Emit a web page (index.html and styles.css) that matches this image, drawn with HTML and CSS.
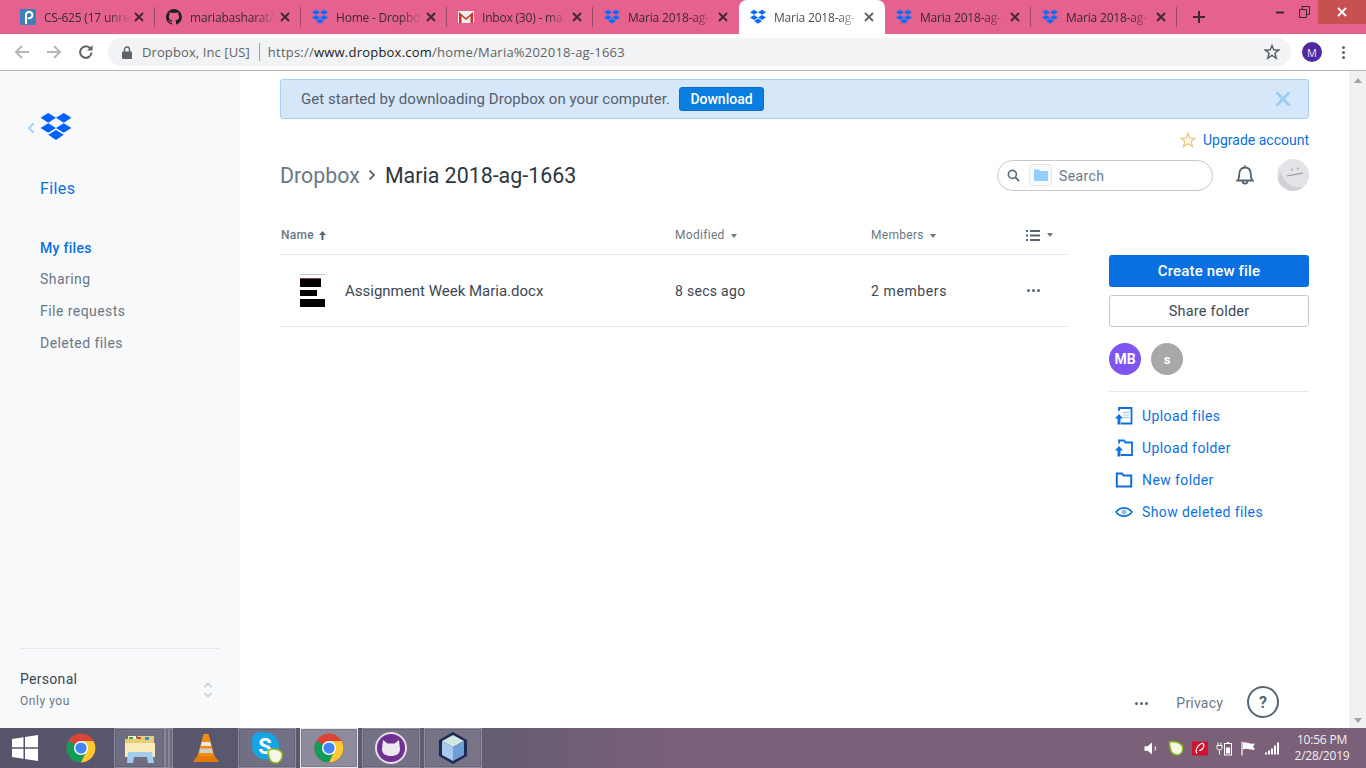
FILE: index.html
```html
<!DOCTYPE html>
<html lang="en">
<head>
  <meta charset="UTF-8" />
  <title>Dropbox - Maria 2018-ag-1663</title>
  <link rel="stylesheet" href="styles.css">
</head>
<body>
  <svg class="defs" width="0" height="0">
    <symbol id="db" viewBox="0 0 32 29">
      <path d="M8 0L16 5L8 10L0 5ZM24 0L32 5L24 10L16 5ZM8 10.5L16 15.5L8 20.5L0 15.5ZM24 10.5L32 15.5L24 20.5L16 15.5ZM16 17.5L24 22.5L16 28L8 22.5Z"/>
    </symbol>
    <symbol id="chrome" viewBox="0 0 32 32">
      <circle cx="16" cy="16" r="15.5" fill="#db4437"/>
      <path d="M16 16L2.6 8.2A15.5 15.5 0 0 0 16 31.5L23.8 18Z" fill="#0f9d58"/>
      <path d="M16 8.5H29.4A15.5 15.5 0 0 1 16 31.5L23 17Z" fill="#fcc934"/>
      <circle cx="16" cy="16" r="7.5" fill="#fff"/>
      <circle cx="16" cy="16" r="6" fill="#4285f4"/>
    </symbol>
    <symbol id="close" viewBox="0 0 10 10">
      <path d="M1 1L9 9M9 1L1 9" fill="none" stroke="currentColor" stroke-width="1.8"/>
    </symbol>
  </svg>

  <header class="tabstrip">
    <div class="tab">
      <svg class="favicon" viewBox="0 0 16 16"><rect width="16" height="16" fill="#3d80b5"/><path d="M6 15V5.5A3.2 3.2 0 1 1 8 9" fill="none" stroke="#fff" stroke-width="2"/></svg>
      <span class="tab-title">CS-625 (17 unre</span>
      <svg class="tab-x"><use href="#close"/></svg>
    </div>
    <div class="tab">
      <svg class="favicon" viewBox="0 0 16 16"><path fill="#1b1f23" d="M8 0a8 8 0 0 0-2.5 15.6c.4.1.5-.2.5-.4v-1.4c-2.2.5-2.7-1-2.7-1-.4-.9-.9-1.200-.9-1.200-.7-.5.1-.5.1-.5.8.1 1.200.8 1.200.8.7 1.200 1.900.9 2.300.7.100-.5.300-.9.500-1.100-1.800-.2-3.600-.9-3.600-4 0-.9.300-1.600.800-2.100-.100-.2-.400-1 .100-2.100 0 0 .700-.2 2.200.800a7.600 7.600 0 0 1 4 0c1.500-1 2.200-.8 2.200-.8.400 1.100.200 1.900.100 2.100.500.600.800 1.300.800 2.100 0 3.100-1.900 3.700-3.700 3.900.300.300.600.800.600 1.500v2.200c0 .2.100.5.600.4A8 8 0 0 0 8 0z"/></svg>
      <span class="tab-title">mariabasharat/</span>
      <svg class="tab-x"><use href="#close"/></svg>
    </div>
    <div class="tab">
      <svg class="favicon db-blue"><use href="#db"/></svg>
      <span class="tab-title">Home - Dropbo</span>
      <svg class="tab-x"><use href="#close"/></svg>
    </div>
    <div class="tab">
      <svg class="favicon" viewBox="0 0 16 16"><rect y="2" width="16" height="12" fill="#eee"/><path d="M1 14V3l7 6 7-6v11h-2.500V7L8 11 3.500 7v7z" fill="#c5392b"/></svg>
      <span class="tab-title">Inbox (30) - ma</span>
      <svg class="tab-x"><use href="#close"/></svg>
    </div>
    <div class="tab">
      <svg class="favicon db-blue"><use href="#db"/></svg>
      <span class="tab-title">Maria 2018-ag-</span>
      <svg class="tab-x"><use href="#close"/></svg>
    </div>
    <div class="tab tab-active">
      <svg class="favicon db-blue"><use href="#db"/></svg>
      <span class="tab-title">Maria 2018-ag-</span>
      <svg class="tab-x"><use href="#close"/></svg>
    </div>
    <div class="tab">
      <svg class="favicon db-blue"><use href="#db"/></svg>
      <span class="tab-title">Maria 2018-ag-</span>
      <svg class="tab-x"><use href="#close"/></svg>
    </div>
    <div class="tab">
      <svg class="favicon db-blue"><use href="#db"/></svg>
      <span class="tab-title">Maria 2018-ag-</span>
      <svg class="tab-x"><use href="#close"/></svg>
    </div>
    <svg class="new-tab" viewBox="0 0 14 14"><path d="M7 1V13M1 7H13" fill="none" stroke="#3a2a30" stroke-width="2"/></svg>
    <div class="win-controls">
      <span class="win-btn"><svg width="10" height="10" viewBox="0 0 10 10"><path d="M1 5.500H9" stroke="#2b2b2b" stroke-width="2"/></svg></span>
      <span class="win-btn"><svg width="11" height="12" viewBox="0 0 11 12"><path d="M.5 3.500H7.500V11.500H.5ZM3 3.500V.5H10.500V8.500H7.500" fill="none" stroke="#2b2b2b"/></svg></span>
      <span class="win-close"><svg width="10" height="10"><use href="#close"/></svg></span>
    </div>
  </header>

  <div class="toolbar">
    <svg class="nav-icon" viewBox="0 0 16 16"><path d="M15 8H2M8 2L2 8L8 14" fill="none" stroke="#b5b7ba" stroke-width="2"/></svg>
    <svg class="nav-icon" viewBox="0 0 16 16"><path d="M1 8H14M8 2L14 8L8 14" fill="none" stroke="#b5b7ba" stroke-width="2"/></svg>
    <svg class="nav-icon" viewBox="0 0 16 16"><path d="M13.500 8.500A5.700 5.700 0 1 1 11.800 4" fill="none" stroke="#5f6368" stroke-width="2"/><path d="M14.500 1V6.500H9Z" fill="#5f6368"/></svg>
    <div class="omnibox">
      <svg class="lock" viewBox="0 0 10 13"><path d="M2.500 6V3.500a2.500 2.500 0 0 1 5 0V6" fill="none" stroke="#5f6368" stroke-width="1.400"/><rect y="5.500" width="10" height="7.500" rx="1" fill="#5f6368"/></svg>
      <span class="site-name">Dropbox, Inc [US]</span>
      <span class="url">https://<b>www.dropbox.com</b>/home/Maria%202018-ag-1663</span>
      <svg class="star" viewBox="0 0 16 16"><path d="M8 1.500L9.900 6H14.800L10.900 9.200L12.300 14.200L8 11.400L3.700 14.200L5.100 9.200L1.200 6H6.100Z" fill="none" stroke="#5f6368" stroke-width="1.500"/></svg>
    </div>
    <span class="profile">M</span>
    <span class="dots"><i></i><i></i><i></i></span>
  </div>

  <div class="window">
    <aside class="sidebar">
      <div class="side-top">
        <div class="brand">
          <svg class="back" viewBox="0 0 8 12"><path d="M6.500 1.500L2 6L6.500 10.500" fill="none" stroke="#a9d0f5" stroke-width="2"/></svg>
          <svg class="brand-logo"><use href="#db"/></svg>
        </div>
        <div class="side-title">Files</div>
        <nav class="side-nav">
          <a class="side-link current">My files</a>
          <a class="side-link">Sharing</a>
          <a class="side-link">File requests</a>
          <a class="side-link">Deleted files</a>
        </nav>
      </div>
      <div class="account">
        <div>
          <div class="account-name">Personal</div>
          <div class="account-sub">Only you</div>
        </div>
        <svg class="updown" viewBox="0 0 10 18"><path d="M1.500 6L5 2.500L8.500 6M1.500 12L5 15.500L8.500 12" fill="none" stroke="#c4cad0" stroke-width="1.500"/></svg>
      </div>
    </aside>

    <main class="content">
      <div class="banner">
        <span>Get started by downloading Dropbox on your computer.</span>
        <button class="btn-download">Download</button>
        <svg class="banner-x"><use href="#close"/></svg>
      </div>

      <div class="upgrade">
        <svg class="upgrade-star" viewBox="0 0 16 16"><path d="M8 1L10 5.900L15.200 6.200L11.200 9.500L12.500 14.600L8 11.800L3.500 14.600L4.800 9.500L.8 6.200L6 5.900Z" fill="#fbf6e6" stroke="#e8c983" stroke-width="1.200"/></svg>
        <a class="link">Upgrade account</a>
      </div>

      <div class="title-row">
        <h1 class="crumbs"><span class="crumb-root">Dropbox</span>
          <svg class="crumb-sep" viewBox="0 0 8 12"><path d="M1.500 1.500L6 6L1.500 10.500" fill="none" stroke="#3d4752" stroke-width="1.500"/></svg>
          <span>Maria 2018-ag-1663</span></h1>
        <div class="search">
          <svg class="search-icon" viewBox="0 0 14 14"><circle cx="5.800" cy="5.800" r="4.300" fill="none" stroke="#5b6b7a" stroke-width="1.800"/><path d="M9 9L13 13" stroke="#5b6b7a" stroke-width="2"/></svg>
          <span class="search-scope"><svg viewBox="0 0 14 12" width="14" height="12"><path d="M0 1.500A1 1 0 0 1 1 .5H5L6.500 2H13A1 1 0 0 1 14 3V11A1 1 0 0 1 13 12H1A1 1 0 0 1 0 11Z" fill="#92ceff"/></svg></span>
          <span class="search-text">Search</span>
        </div>
        <svg class="bell" viewBox="0 0 18 20"><path d="M1.500 15.500C3.200 14 3.200 12 3.200 9.500C3.200 5.200 5.500 2.500 9 2.500C12.500 2.500 14.800 5.200 14.800 9.500C14.800 12 14.800 14 16.500 15.500ZM6.500 16C6.500 19.500 11.500 19.500 11.500 16M9 .5V2.500" fill="none" stroke="#566573" stroke-width="1.800"/></svg>
        <svg class="avatar" viewBox="0 0 32 32"><circle cx="16" cy="16" r="16" fill="#e3e4e7"/><path d="M1 21A16 16 0 0 0 27 27.500C17 30 7 25 3 12Z" fill="#cfd1d6"/><path d="M10 17L26 14M15 9.500V12M21 8.500V11" fill="none" stroke="#8d9096"/></svg>
      </div>

      <div class="columns">
        <section class="files">
          <div class="row head">
            <span class="col-name"><b>Name</b>
              <svg class="sort" viewBox="0 0 7 9"><path d="M3.500 0L7 4H4.500V9H2.500V4H0Z"/></svg></span>
            <span class="col-mod">Modified<i class="caret"></i></span>
            <span class="col-mem">Members<i class="caret"></i></span>
            <span class="col-act">
              <svg class="list-icon" viewBox="0 0 14 11"><path d="M0 0H2V2H0ZM4 0H14V2H4ZM0 4.500H2V6.500H0ZM4 4.500H14V6.500H4ZM0 9H2V11H0ZM4 9H14V11H4Z"/></svg><i class="caret"></i>
            </span>
          </div>
          <div class="row file">
            <span class="col-name">
              <span class="thumb"><i class="t1"></i><i class="t2"></i><i class="t3"></i><i class="t4"></i></span>
              <span class="file-name">Assignment Week Maria.docx</span>
            </span>
            <span class="col-mod">8 secs ago</span>
            <span class="col-mem">2 members</span>
            <span class="col-act"><span class="more"><i></i><i></i><i></i></span></span>
          </div>
        </section>

        <aside class="actions">
          <button class="btn-primary">Create new file</button>
          <button class="btn-plain">Share folder</button>
          <div class="members">
            <span class="member mb">MB</span>
            <span class="member ms">s</span>
          </div>
          <div class="action-list">
            <a class="action">
              <svg viewBox="0 0 18 18"><path d="M4 4V1H16.500V16.500H6" fill="none" stroke="#0d6fe0" stroke-width="1.800"/><path d="M8 5.500H14M8 8H14M8 10.500H14" stroke="#9cc4f2"/><path d="M4 7L8 11.500H5.500V17.500H2.500V11.500H0Z" fill="#0d6fe0"/></svg>
              Upload files</a>
            <a class="action">
              <svg viewBox="0 0 18 18"><path d="M4 4.500V1.500H9L10.500 3.500H17V16H6" fill="none" stroke="#0d6fe0" stroke-width="1.800"/><path d="M4 7L8 11.500H5.500V17.500H2.500V11.500H0Z" fill="#0d6fe0"/></svg>
              Upload folder</a>
            <a class="action">
              <svg viewBox="0 0 18 18"><path d="M1.800 2.500H7L8.500 4.500H16.200V15.500H1.800Z" fill="none" stroke="#0d6fe0" stroke-width="2"/></svg>
              New folder</a>
            <a class="action">
              <svg viewBox="0 0 18 18"><path d="M1 9C5 3.500 13 3.500 17 9C13 14.500 5 14.500 1 9Z" fill="none" stroke="#0d6fe0" stroke-width="1.600"/><circle cx="9" cy="9" r="2.500" fill="#8fbdf0"/></svg>
              Show deleted files</a>
          </div>
        </aside>
      </div>

      <footer class="foot">
        <span class="more foot-more"><i></i><i></i><i></i></span>
        <span class="privacy">Privacy</span>
        <span class="help">?</span>
      </footer>
    </main>

    <div class="scrollbar">
      <i class="arrow-up"></i>
      <i class="arrow-down"></i>
    </div>
  </div>

  <footer class="taskbar">
    <svg class="start" viewBox="0 0 26 26"><path d="M0 4L11.500 2.300V12.200H0ZM13 2.100L26 0V12.200H13ZM0 13.800H11.500V23.700L0 22ZM13 13.800H26V26L13 23.900Z" fill="#fff"/></svg>
    <span class="task plain first"><svg width="30" height="30"><use href="#chrome"/></svg></span>
    <span class="task boxed explorer">
      <svg width="32" height="30" viewBox="0 0 32 30"><path d="M1 6H12L14 3H30V24H1Z" fill="#e9cf78"/><path d="M4 3H12V6H4Z" fill="#fff3c4"/><path d="M5 4H9V6H5Z" fill="#3fa34d"/><path d="M13 4H17V6H13Z" fill="#d3473a"/><path d="M21 4H25V7H21Z" fill="#3a8ed1"/><path d="M1 10H31V24H1Z" fill="#f9ecb8"/><path d="M4 19H28L30 30H24L23 24H10L9 30H3Z" fill="#a3cdec"/></svg>
    </span>
    <span class="task-stack"><i></i><i></i></span>
    <span class="task plain vlc">
      <svg width="26" height="30" viewBox="0 0 26 30"><path d="M10.500 1H15.500L22 25H4Z" fill="#f28c13"/><path d="M8.800 9H17.200L18.200 13H7.800Z" fill="#e8e8e8"/><path d="M7 15.500H19L20 20H6Z" fill="#cfcfcf"/><path d="M4 23H22L26 29H0Z" fill="#e57a06"/></svg>
    </span>
    <span class="task boxed">
      <svg width="32" height="32" viewBox="0 0 32 32"><circle cx="9" cy="8" r="8" fill="#12a5e8"/><circle cx="14.500" cy="14" r="13.500" fill="#12a5e8"/><text x="14" y="22" text-anchor="middle" class="skype-s">S</text><path d="M18 18C22 16 29 17 31 21C32 26 29.500 30 26 31C22 31.500 19 29 18 25C17.500 22 16.500 20 18 18Z" fill="#f6f7e6" stroke="#8cba18" stroke-width="1.500"/></svg>
    </span>
    <span class="task boxed active"><svg width="30" height="30"><use href="#chrome"/></svg></span>
    <span class="task boxed">
      <svg width="32" height="32" viewBox="0 0 32 32"><circle cx="16" cy="16" r="15" fill="#6f2f93" stroke="#e4e0e8" stroke-width="2"/><path d="M8 8L12.500 11.500H19.500L24 8L25 17C25 22 21 24 16 24C11 24 7 22 7 17Z" fill="#ece8ee"/></svg>
    </span>
    <span class="task boxed">
      <svg width="32" height="34" viewBox="0 0 32 34"><path d="M16 1L30 9V25L16 33L2 25V9Z" fill="#1d2a52"/><path d="M16 4L27 10L16 16L5 10Z" fill="#cfe8e0"/><path d="M5 10L16 16V30L5 24Z" fill="#a9c8ec"/><path d="M27 10L16 16V30L27 24Z" fill="#6e9fd8"/></svg>
    </span>

    <div class="tray">
      <svg viewBox="0 0 14 14"><path d="M0 5H3L7 1.500V12.500L3 9H0Z" fill="#fff"/><path d="M9.500 5A3 3 0 0 1 9.500 9" fill="none" stroke="#ddd"/></svg>
      <svg viewBox="0 0 14 14"><path d="M1 1C5 0 11 1 13 5C14 9 12 12 9 13C6 13 3 12 2 8C1.500 5 .5 3 1 1Z" fill="#f6f7e6" stroke="#8cba18" stroke-width="1.400"/></svg>
      <svg viewBox="0 0 16 14"><rect width="16" height="14" fill="#d0122c"/><path d="M5 12C2 8 8 1 11 2C13 4 11 9 7 9" fill="none" stroke="#fff" stroke-width="1.200"/></svg>
      <svg viewBox="0 0 16 14"><path d="M2 1V4M5 1V4M1 4H6V7C6 9 1 9 1 7ZM3.500 9V13" fill="none" stroke="#fff"/><rect x="8.500" y="2" width="7" height="11.500" fill="none" stroke="#fff"/><rect x="10" y="6" width="4" height="6" fill="#fff"/><rect x="11" y=".5" width="2" height="1.500" fill="#fff"/></svg>
      <svg viewBox="0 0 16 14"><path d="M2 0V14" stroke="#fff" stroke-width="1.200"/><path d="M3 1C7 0 9 3 15 2L13 5L15 8C10 9 7 6 3 8Z" fill="#fff"/></svg>
      <svg viewBox="0 0 16 14"><path d="M1 11H3V13H1ZM4 9H6V13H4ZM7 7H9V13H7ZM10 4H12V13H10ZM13 1H15V13H13Z" fill="#fff"/></svg>
    </div>
    <div class="clock">
      <div>10:56 PM</div>
      <div>2/28/2019</div>
    </div>
  </footer>
</body>
</html>
```

FILE: styles.css
```css
* {
  box-sizing: border-box;
}
body {
  margin: 0;
  width: 1366px;
  height: 768px;
  overflow: hidden;
  display: flex;
  flex-direction: column;
  font-family: 'Roboto', 'Liberation Sans', sans-serif;
  color: #3d4752;
  background: #fff;
}
.defs {
  display: block;
  height: 0;
}
i {
  display: block;
}

/* browser tabs */
.tabstrip {
  height: 34px;
  flex: none;
  display: flex;
  padding-left: 9px;
  background: #e5628e;
  font-family: 'Open Sans', 'Liberation Sans', sans-serif;
  font-size: 12px;
}
.tab {
  width: 146px;
  height: 34px;
  display: flex;
  align-items: center;
  padding-left: 11px;
  position: relative;
  color: #3b2a33;
}
.tab::after {
  content: '';
  position: absolute;
  right: 0;
  top: 7px;
  height: 20px;
  width: 1px;
  background: #9a4a68;
}
.tab:nth-child(5)::after,
.tab-active::after {
  display: none;
}
.tab-active {
  background: #fff;
  border-radius: 8px 8px 0 0;
  color: #4a4f55;
}
.favicon {
  width: 16px;
  height: 16px;
  flex: none;
}
.db-blue {
  fill: #0d6efd;
}
.tab-title {
  margin-left: 8px;
  width: 86px;
  white-space: nowrap;
  letter-spacing: -0.2px;
  -webkit-mask-image: linear-gradient(to right, #000 75%, transparent 100%);
  mask-image: linear-gradient(to right, #000 75%, transparent 100%);
}
.tab-x {
  width: 10px;
  height: 10px;
  margin-left: 4px;
  color: #38282f;
  flex: none;
}
.tab-active .tab-x {
  color: #5f6368;
}
.new-tab {
  width: 14px;
  height: 14px;
  margin: 10px 0 0 15px;
}
.win-controls {
  margin-left: auto;
  display: flex;
  align-self: flex-start;
}
.win-btn {
  width: 24px;
  height: 24px;
  display: flex;
  align-items: center;
  justify-content: center;
}
.win-close {
  width: 48px;
  height: 24px;
  margin-left: 2px;
  background: #c75050;
  color: #fff;
  display: flex;
  align-items: center;
  justify-content: center;
}

/* browser toolbar */
.toolbar {
  height: 37px;
  flex: none;
  display: flex;
  align-items: center;
  padding: 0 14px 0 14px;
  border-bottom: 1px solid #b8b8b8;
  background: #fff;
  font-family: 'Open Sans', 'Liberation Sans', sans-serif;
}
.nav-icon {
  width: 16px;
  height: 16px;
  margin-right: 16px;
  flex: none;
}
.omnibox {
  width: 1183px;
  height: 28px;
  margin-left: -2px;
  display: flex;
  align-items: center;
  padding: 0 11px 0 14px;
  border-radius: 14px;
  background: #f1f3f4;
  font-size: 13px;
}
.lock {
  width: 10px;
  height: 13px;
}
.site-name {
  margin-left: 10px;
  padding-right: 9px;
  border-right: 1px solid #9a9da0;
  line-height: 18px;
  color: #5f6368;
  letter-spacing: .1px;
}
.url {
  margin-left: 8px;
  color: #5f6368;
  letter-spacing: .22px;
}
.url b {
  font-weight: 400;
  color: #202124;
}
.star {
  width: 16px;
  height: 16px;
  margin-left: auto;
}
.profile {
  width: 20px;
  height: 20px;
  margin-left: 11px;
  border-radius: 50%;
  background: #4f2a9e;
  color: #e8e3f5;
  font-size: 11px;
  display: flex;
  align-items: center;
  justify-content: center;
}
.dots {
  margin-left: 20px;
  display: flex;
  flex-direction: column;
  gap: 2px;
}
.dots i {
  width: 3px;
  height: 3px;
  border-radius: 50%;
  background: #5f6368;
}

/* page */
.window {
  flex: 1;
  min-height: 0;
  display: flex;
}
.sidebar {
  width: 240px;
  flex: none;
  display: flex;
  flex-direction: column;
  justify-content: space-between;
  background: #f7f9fa;
}
.side-top {
  padding: 42px 0 0 40px;
}
.brand {
  display: flex;
  align-items: center;
  height: 28px;
  margin-left: -13px;
}
.back {
  width: 8px;
  height: 12px;
  margin-top: 1px;
  margin-right: 5px;
}
.brand-logo {
  width: 32px;
  height: 28px;
  fill: #0061fe;
}
.side-title {
  margin-top: 37px;
  font-size: 16px;
  line-height: 22px;
  color: #0d6fe0;
  letter-spacing: .4px;
}
.side-nav {
  margin-top: 32px;
  display: flex;
  flex-direction: column;
}
.side-link {
  height: 32px;
  line-height: 32px;
  font-size: 14px;
  color: #6a7885;
  letter-spacing: .45px;
}
.side-link.current {
  height: 31px;
  font-weight: 500;
  color: #0d6fe0;
  letter-spacing: .3px;
}
.account {
  margin: 0 20px;
  height: 80px;
  padding-top: 20px;
  border-top: 1px solid #e6e8eb;
  display: flex;
  justify-content: space-between;
}
.account-name {
  font-size: 14px;
  line-height: 20px;
  color: #3d4752;
  letter-spacing: .3px;
}
.account-sub {
  margin-top: 2px;
  font-size: 12px;
  line-height: 20px;
  color: #6a7885;
  letter-spacing: .55px;
}
.updown {
  width: 10px;
  height: 18px;
  margin: 12px 7px 0 0;
}

.content {
  flex: 1;
  min-width: 0;
  display: flex;
  flex-direction: column;
  padding: 8px 40px 0;
}
.banner {
  height: 40px;
  display: flex;
  align-items: center;
  padding: 0 17px 0 20px;
  border: 1px solid #a8d0f7;
  border-radius: 3px;
  background: #d6e7fa;
  font-size: 15px;
  color: #55606b;
  letter-spacing: .04px;
}
.btn-download {
  width: 85px;
  height: 24px;
  margin-left: 9px;
  border: 1px solid #0a6fd0;
  border-radius: 3px;
  background: #0a7de0;
  color: #fff;
  font: 500 14px 'Roboto', sans-serif;
}
.banner-x {
  width: 16px;
  height: 16px;
  margin-left: auto;
  color: #9ccdf5;
}
.upgrade {
  height: 20px;
  margin-top: 11px;
  display: flex;
  align-items: center;
  justify-content: flex-end;
  gap: 7px;
}
.upgrade-star {
  width: 16px;
  height: 16px;
}
.link {
  font-size: 14px;
  color: #0d6fe0;
}
.title-row {
  height: 32px;
  margin-top: 9px;
  display: flex;
  align-items: center;
}
.crumbs {
  margin: 0;
  flex: 1;
  display: flex;
  align-items: center;
  font-size: 21.4px;
  font-weight: 400;
  color: #2d3640;
}
.crumb-root {
  color: #6a7885;
}
.crumb-sep {
  width: 8px;
  height: 12px;
  margin: 0 9px 0 8px;
}
.search {
  width: 216px;
  height: 31px;
  display: flex;
  align-items: center;
  padding-left: 9px;
  border: 1px solid #c4cad0;
  border-radius: 16px;
}
.search-icon {
  width: 13px;
  height: 13px;
}
.search-scope {
  width: 23px;
  height: 22px;
  margin-left: 9px;
  display: flex;
  align-items: center;
  justify-content: center;
  border: 1px solid #e6e8eb;
  border-radius: 3px;
  background: #f7f9fa;
}
.search-text {
  margin-left: 7px;
  margin-top: 1px;
  font-size: 14px;
  color: #6a7885;
  letter-spacing: .4px;
}
.bell {
  width: 18px;
  height: 20px;
  margin-left: 23px;
}
.avatar {
  width: 32px;
  height: 32px;
  margin-left: 23px;
}

.columns {
  margin-top: 25px;
  display: flex;
  justify-content: space-between;
}
.files {
  width: 788px;
}
.row {
  display: flex;
  align-items: center;
  border-bottom: 1px solid #e6e8eb;
}
.head {
  height: 39px;
  font-size: 12px;
  color: #6a7885;
  letter-spacing: .3px;
}
.file {
  height: 72px;
  font-size: 14px;
  color: #3d4752;
  letter-spacing: .3px;
}
.col-name {
  width: 394px;
  padding-left: 1px;
  display: flex;
  align-items: center;
}
.col-name b {
  font-weight: 500;
}
.sort {
  width: 7px;
  height: 9px;
  margin-left: 5px;
  fill: #566573;
}
.col-mod {
  width: 197px;
  padding-left: 1px;
}
.col-mem {
  width: 155px;
}
.file .col-mem {
  letter-spacing: .6px;
}
.col-act {
  display: flex;
  align-items: center;
}
.caret {
  display: inline-block;
  margin-left: 6px;
  vertical-align: middle;
  border-left: 3.500px solid transparent;
  border-right: 3.500px solid transparent;
  border-top: 4px solid #6a7885;
}
.list-icon {
  width: 14px;
  height: 11px;
  fill: #566573;
}
.col-act .caret {
  margin-left: 7px;
}
.thumb {
  width: 26px;
  height: 33px;
  margin-left: 19px;
  display: flex;
  flex-direction: column;
}
.thumb i {
  background: #000;
}
.t1 {
  height: 1px;
  width: 25px;
  background: #ccc !important;
  margin-bottom: 3px;
}
.t2 {
  height: 9px;
  width: 21px;
  border-top: 1px solid #8a3a58;
  margin-bottom: 3px;
}
.t3 {
  height: 6px;
  width: 17px;
  margin-bottom: 3px;
}
.t4 {
  height: 8px;
  width: 25px;
}
.file-name {
  margin-left: 19px;
  font-size: 15px;
  letter-spacing: 0;
}
.more {
  margin-left: 1px;
  display: flex;
  gap: 2px;
}
.more i {
  width: 3px;
  height: 3px;
  border-radius: 50%;
  background: #566573;
}

.actions {
  width: 200px;
  padding-top: 39px;
  display: flex;
  flex-direction: column;
}
.btn-primary {
  height: 32px;
  border: none;
  border-radius: 3px;
  background: #0a6fe0;
  color: #fff;
  font: 500 15px 'Roboto', sans-serif;
  letter-spacing: .15px;
}
.btn-plain {
  height: 32px;
  margin-top: 8px;
  border: 1px solid #c4cad0;
  border-radius: 3px;
  background: #fff;
  color: #3d4752;
  font: 400 14.5px 'Roboto', sans-serif;
  letter-spacing: .2px;
}
.members {
  margin-top: 16px;
  padding-bottom: 16px;
  border-bottom: 1px solid #e6e8eb;
  display: flex;
  gap: 10px;
}
.member {
  width: 32px;
  height: 32px;
  border-radius: 50%;
  display: flex;
  align-items: center;
  justify-content: center;
  color: #fff;
  font-size: 14px;
  font-weight: 700;
}
.mb {
  background: #7f54f0;
}
.ms {
  background: #a8a8a8;
  font-size: 13px;
}
.action-list {
  margin-top: 8px;
  display: flex;
  flex-direction: column;
}
.action {
  height: 32px;
  display: flex;
  align-items: center;
  gap: 9px;
  padding-left: 6px;
  font-size: 14px;
  color: #0d6fe0;
  letter-spacing: .4px;
}
.action svg {
  width: 18px;
  height: 18px;
}

.foot {
  margin-top: auto;
  height: 50px;
  display: flex;
  align-items: center;
  justify-content: flex-end;
  padding-right: 30px;
  margin-bottom: 1px;
}
.foot-more {
  margin-top: 2px;
  margin-right: 28px;
}
.privacy {
  margin-top: 2px;
  font-size: 14px;
  color: #6a7885;
  letter-spacing: .2px;
}
.help {
  width: 32px;
  height: 32px;
  margin-left: 24px;
  border: 2px solid #566573;
  border-radius: 50%;
  display: flex;
  align-items: center;
  justify-content: center;
  font-size: 16px;
  font-weight: 700;
  color: #566573;
}
.scrollbar {
  width: 17px;
  flex: none;
  background: #f1f1f1;
  display: flex;
  flex-direction: column;
  justify-content: space-between;
  align-items: center;
  padding: 7px 0 5px;
}
.arrow-up {
  border-left: 4.500px solid transparent;
  border-right: 4.500px solid transparent;
  border-bottom: 5px solid #a3a3a3;
}
.arrow-down {
  border-left: 4.500px solid transparent;
  border-right: 4.500px solid transparent;
  border-top: 5px solid #a3a3a3;
}

/* windows taskbar */
.taskbar {
  height: 40px;
  flex: none;
  display: flex;
  align-items: center;
  padding-left: 12px;
  background: linear-gradient(to right, #55546b 0%, #5d5b72 30%, #7a6078 50%, #7a6078 100%);
}
.start {
  width: 26px;
  height: 26px;
}
.task {
  height: 40px;
  display: flex;
  align-items: center;
  justify-content: center;
  flex: none;
}
.plain.first {
  width: 58px;
  margin-left: 14px;
}
.boxed {
  width: 58px;
  border: 1px solid rgba(255, 255, 255, .2);
  background: rgba(255, 255, 255, .14);
  box-shadow: inset 0 0 0 1px rgba(0, 0, 0, .1);
  margin-right: 4px;
}
.explorer {
  width: 51px;
  margin: 0 0 0 4px;
}
.task-stack {
  display: flex;
  height: 40px;
  width: 8px;
}
.task-stack i {
  width: 4px;
  border: 1px solid rgba(255, 255, 255, .2);
  background: rgba(255, 255, 255, .12);
}
.vlc {
  width: 65px;
}
.active {
  border: 1px solid #e8e8e8;
  background: rgba(255, 255, 255, .3);
}
.skype-s {
  font: 700 22px 'Roboto', sans-serif;
  fill: #fff;
}
.tray {
  margin-left: auto;
  display: flex;
  align-items: center;
  gap: 8px;
}
.tray svg {
  width: 16px;
  height: 15px;
}
.clock {
  width: 70px;
  margin: 0 9px 0 7px;
  text-align: center;
  font: 12px/16px 'Open Sans', 'Liberation Sans', sans-serif;
  letter-spacing: -0.2px;
  color: #f2f2f2;
}
```
